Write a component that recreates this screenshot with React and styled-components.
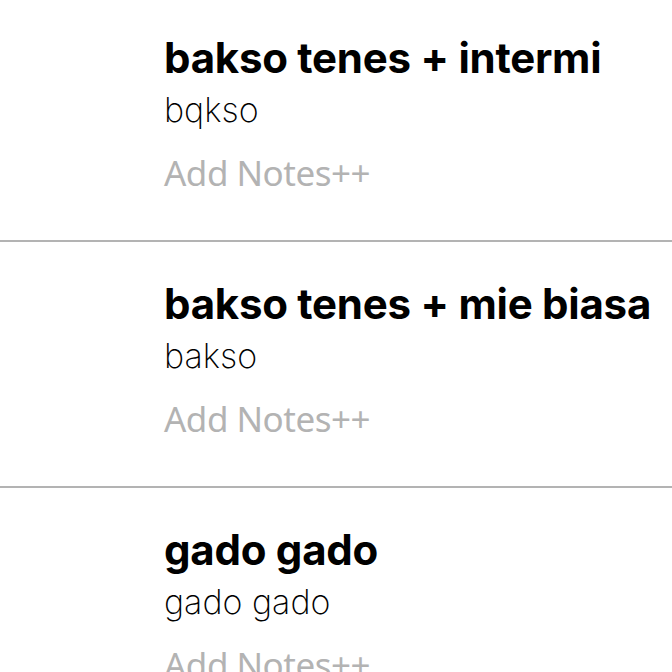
import React from "react";
import styled, { createGlobalStyle } from "styled-components";

const Global = createGlobalStyle`
  html, body { margin: 0; padding: 0; background: #fff; }
  body { font-family: Inter, "Liberation Sans", sans-serif; overflow: hidden; }
`;

const List = styled.div`
  display: flex;
  flex-direction: column;
`;

const Row = styled.div`
  box-sizing: border-box;
  display: flex;
  flex-direction: column;
  flex-shrink: 0;
  padding: ${(p) => (p.$first ? "33px" : "37px")} 0 0 164px;
  height: ${(p) => (p.$first ? "242px" : "246px")};
  border-bottom: 2px solid #b3b3b3;
`;

const Title = styled.div`
  font-family: Inter, sans-serif;
  font-weight: 700;
  font-size: 42px;
  line-height: 50px;
  color: #000;
  white-space: nowrap;
  letter-spacing: -0.25px;
`;

const Sub = styled.div`
  font-family: Inter, sans-serif;
  font-weight: 200;
  font-size: 34px;
  line-height: 54px;
  color: #000;
  white-space: nowrap;
`;

const Notes = styled.div`
  margin-top: 11px;
  font-family: "Noto Sans", sans-serif;
  font-size: 35px;
  line-height: 50px;
  letter-spacing: -0.5px;
  color: #b3b3b3;
  white-space: nowrap;
`;

const items = [
  { title: "bakso tenes + intermi", sub: "bqkso" },
  { title: "bakso tenes + mie biasa", sub: "bakso" },
  { title: "gado gado", sub: "gado gado" },
];

export default function App() {
  return (
    <>
      <Global />
      <List>
        {items.map((it, i) => (
          <Row key={i} $first={i === 0}>
            <Title>{it.title}</Title>
            <Sub>{it.sub}</Sub>
            <Notes>Add Notes++</Notes>
          </Row>
        ))}
      </List>
    </>
  );
}
